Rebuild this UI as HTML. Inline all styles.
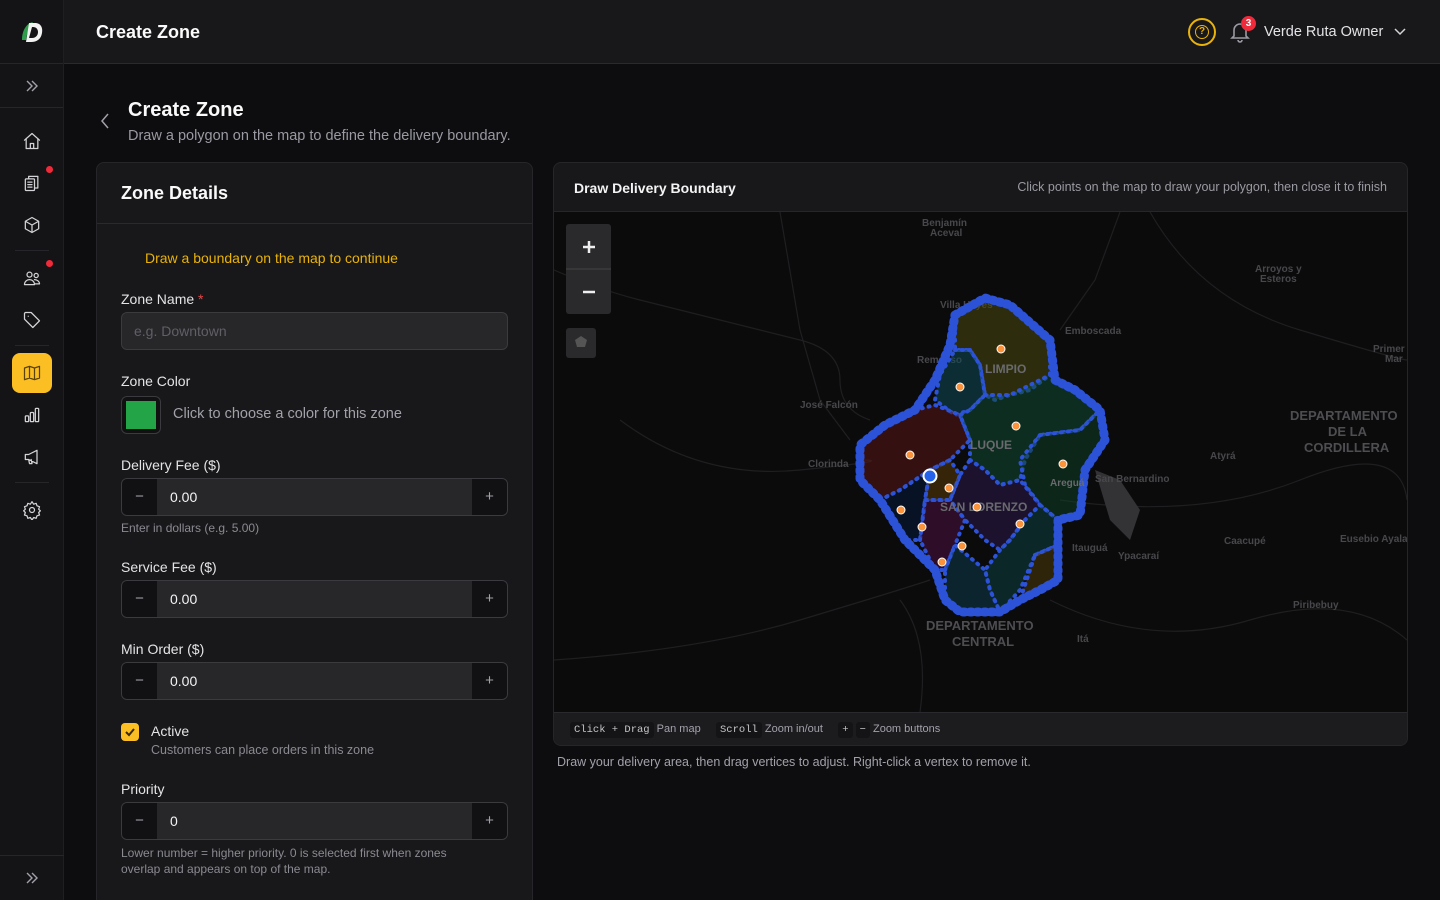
<!DOCTYPE html>
<html style="overflow:hidden;width:1440px;height:900px"><head><meta charset="utf-8"><style>
*{box-sizing:border-box;margin:0;padding:0}
body{width:1440px;height:900px;overflow:hidden;background:#0d0d0f;font-family:"Liberation Sans",sans-serif;color:#e8e8ea;position:relative}
.side{position:absolute;left:0;top:0;width:64px;height:900px;background:#141416;border-right:1px solid #1f1f22}
.logo{height:64px;display:flex;align-items:center;justify-content:center;border-bottom:1px solid #26262a}
.top{position:absolute;left:64px;top:0;right:0;height:64px;background:#18181b;border-bottom:1px solid #2a2a2e}
.ic{position:absolute;left:22px;width:20px;height:20px}
.ic svg{width:20px;height:20px;fill:none;stroke:#d4d4d8;stroke-width:1.5;stroke-linecap:round;stroke-linejoin:round}
.dot{position:absolute;width:7px;height:7px;border-radius:50%;background:#ef2b3b}
.card{position:absolute;background:#18181a;border:1px solid #26262a;border-radius:8px}
.lbl{position:absolute;left:24px;font-size:14px;color:#e4e4e7}
.inp{position:absolute;left:24px;width:387px;height:38px;border:1px solid #3a3a3f;border-radius:6px;background:#27272a;overflow:hidden}
.num .m,.num .p{position:absolute;top:0;width:35px;height:36px;background:#111113;color:#a1a1aa;font-size:15px;text-align:center;line-height:36px}
.num .m{left:0}.num .p{right:0}
.num .v{position:absolute;left:48px;top:10px;font-size:14px;color:#f4f4f5}
.hint{position:absolute;left:24px;font-size:12px;color:#8a8a92}
.kbd{font-family:"Liberation Mono",monospace;background:#141416;padding:2px 4px;border-radius:3px;font-size:10.5px;color:#c4c4c8}
</style></head><body>
<div class="side">
 <div class="logo"><svg width="28" height="28" viewBox="0 0 28 28"><path d="M4 22 C4 12 9 5 15 4 C11 9 9 15 8 22Z" fill="#2e9e4a"/><path d="M11 5 H17 C23 5 25 10 24 15 C23 21 19 24 13 24 H8 Z M14 9 L11 20 H14 C18 20 20 17 20 14 C20 11 18 9 15 9Z" fill="#f2f2f2"/></svg></div>
 <div style="height:44px;border-bottom:1px solid #26262a;display:flex;align-items:center;justify-content:center"><svg width="16" height="16" viewBox="0 0 16 16" fill="none" stroke="#a1a1aa" stroke-width="1.4"><path d="M3 3l5 5-5 5M8 3l5 5-5 5"/></svg></div>
 <div class="ic" style="top:131px"><svg viewBox="0 0 24 24"><path d="M3 11l9-8 9 8M5 9v12h14V9M10 21v-6h4v6"/></svg></div>
 <div class="ic" style="top:173px"><svg viewBox="0 0 24 24"><rect x="4" y="7" width="11" height="14" rx="1"/><path d="M8 7V4h11v14h-4M7 11h5M7 14h5M7 17h5"/></svg></div><div class="dot" style="left:46px;top:166px"></div>
 <div class="ic" style="top:215px"><svg viewBox="0 0 24 24"><path d="M12 3l8 4.5v9L12 21l-8-4.5v-9zM4 7.5l8 4.5 8-4.5M12 12v9"/></svg></div>
 <div style="position:absolute;left:15px;top:250px;width:34px;border-top:1px solid #26262a"></div>
 <div class="ic" style="top:268px"><svg viewBox="0 0 24 24"><circle cx="9" cy="8" r="3"/><circle cx="17" cy="9" r="2.5"/><path d="M3 20c0-4 3-6 6-6s6 2 6 6zM15 14c3 0 6 2 6 5h-5"/></svg></div><div class="dot" style="left:46px;top:260px"></div>
 <div class="ic" style="top:310px"><svg viewBox="0 0 24 24"><path d="M3 4v7l10 10 8-8L11 3H4zM7.5 7.5h.01"/></svg></div>
 <div style="position:absolute;left:15px;top:345px;width:34px;border-top:1px solid #26262a"></div>
 <div style="position:absolute;left:12px;top:353px;width:40px;height:40px;border-radius:8px;background:#fbbf24"></div>
 <div class="ic" style="top:363px"><svg viewBox="0 0 24 24" style="stroke:#5a4300"><path d="M3 6l6-2 6 2 6-2v14l-6 2-6-2-6 2zM9 4v14M15 6v14"/></svg></div>
 <div class="ic" style="top:405px"><svg viewBox="0 0 24 24"><rect x="4" y="13" width="4" height="7" rx="1"/><rect x="10" y="9" width="4" height="11" rx="1"/><rect x="16" y="4" width="4" height="16" rx="1"/></svg></div>
 <div class="ic" style="top:447px"><svg viewBox="0 0 24 24"><path d="M4 9h4l10-5v16L8 15H4zM8 15l1 5h3l-1-5"/></svg></div>
 <div style="position:absolute;left:15px;top:482px;width:34px;border-top:1px solid #26262a"></div>
 <div class="ic" style="top:500px"><svg viewBox="0 0 24 24"><circle cx="12" cy="12" r="3"/><path d="M12 2l2 3 3-1 1 3 3 1-1 3 2 2-2 2 1 3-3 1-1 3-3-1-2 3-2-3-3 1-1-3-3-1 1-3-2-2 2-2-1-3 3-1 1-3 3 1z"/></svg></div>
 <div style="position:absolute;left:0;top:855px;width:64px;border-top:1px solid #26262a;height:45px;display:flex;align-items:center;justify-content:center"><svg width="16" height="16" viewBox="0 0 16 16" fill="none" stroke="#a1a1aa" stroke-width="1.4"><path d="M3 3l5 5-5 5M8 3l5 5-5 5"/></svg></div>
</div>
<div class="top">
 <div style="position:absolute;left:32px;top:22px;font-size:18px;font-weight:bold;color:#fafafa">Create Zone</div>
 <div style="position:absolute;left:1124px;top:18px;width:28px;height:28px;border:2px solid #eab308;border-radius:50%"><div style="position:absolute;left:5px;top:5px;width:14px;height:14px;border:1.5px solid #eab308;border-radius:50%;color:#eab308;font-size:10px;font-weight:bold;text-align:center;line-height:11px">?</div></div>
 <svg style="position:absolute;left:1166px;top:21px" width="20" height="22" viewBox="0 0 20 22" fill="none" stroke="#9a9aa2" stroke-width="1.6"><path d="M4 15V9a6 6 0 0112 0v6l2 2H2zM8 19a2 2 0 004 0"/></svg>
 <div style="position:absolute;left:1177px;top:16px;width:15px;height:15px;border-radius:50%;background:#ef2b3b;color:#fff;font-size:10px;font-weight:bold;text-align:center;line-height:15px">3</div>
 <div style="position:absolute;left:1200px;top:24px;font-size:14.5px;color:#e4e4e7">Verde Ruta Owner</div>
 <svg style="position:absolute;left:1330px;top:27px" width="12" height="10" viewBox="0 0 12 10" fill="none" stroke="#d4d4d8" stroke-width="1.5"><path d="M1 2l5 5 5-5"/></svg>
</div>
<svg style="position:absolute;left:99px;top:113px" width="12" height="16" viewBox="0 0 12 16" fill="none" stroke="#a1a1aa" stroke-width="1.5"><path d="M9 1L3 8l6 7"/></svg>
<div style="position:absolute;left:128px;top:99px;font-size:20px;font-weight:bold;color:#fafafa">Create Zone</div>
<div style="position:absolute;left:128px;top:128px;font-size:14.5px;color:#9a9aa2">Draw a polygon on the map to define the delivery boundary.</div>

<div class="card" style="left:96px;top:162px;width:437px;height:748px">
 <div style="height:61px;border-bottom:1px solid #2a2a2e;padding:20px 24px;font-size:18px;font-weight:bold;color:#fafafa">Zone Details</div>
 <div style="position:absolute;left:48px;top:87px;font-size:14px;color:#eab308">Draw a boundary on the map to continue</div>
 <div class="lbl" style="top:128px">Zone Name <span style="color:#ef4444">*</span></div>
 <div class="inp" style="top:149px"><div style="position:absolute;left:12px;top:10px;font-size:14px;color:#5f5f66">e.g. Downtown</div></div>
 <div class="lbl" style="top:210px">Zone Color</div>
 <div style="position:absolute;left:24px;top:233px;width:40px;height:38px;border:1px solid #3a3a3f;border-radius:6px;background:#111"><div style="position:absolute;left:4px;top:4px;width:30px;height:28px;background:#22a447"></div></div>
 <div style="position:absolute;left:76px;top:243px;font-size:14.5px;color:#a1a1aa">Click to choose a color for this zone</div>
 <div class="lbl" style="top:294px">Delivery Fee ($)</div>
 <div class="inp num" style="top:315px"><div class="m">−</div><div class="v">0.00</div><div class="p">+</div></div>
 <div class="hint" style="top:358px">Enter in dollars (e.g. 5.00)</div>
 <div class="lbl" style="top:396px">Service Fee ($)</div>
 <div class="inp num" style="top:417px"><div class="m">−</div><div class="v">0.00</div><div class="p">+</div></div>
 <div class="lbl" style="top:478px">Min Order ($)</div>
 <div class="inp num" style="top:499px"><div class="m">−</div><div class="v">0.00</div><div class="p">+</div></div>
 <div style="position:absolute;left:24px;top:560px;width:18px;height:18px;border-radius:4px;background:#fbbf24"><svg width="18" height="18" viewBox="0 0 18 18" fill="none" stroke="#3a2a00" stroke-width="2"><path d="M5 9l3 3 5-6"/></svg></div>
 <div style="position:absolute;left:54px;top:560px;font-size:14px;color:#e4e4e7">Active</div>
 <div style="position:absolute;left:54px;top:580px;font-size:12.5px;color:#8a8a92">Customers can place orders in this zone</div>
 <div class="lbl" style="top:618px">Priority</div>
 <div class="inp num" style="top:639px"><div class="m">−</div><div class="v">0</div><div class="p">+</div></div>
 <div class="hint" style="top:682px;line-height:16px;width:350px">Lower number = higher priority. 0 is selected first when zones overlap and appears on top of the map.</div>
</div>

<div class="card" style="left:553px;top:162px;width:855px;height:584px;overflow:hidden">
 <div style="height:49px;border-bottom:1px solid #26262a;position:relative">
  <div style="position:absolute;left:20px;top:17px;font-size:14px;font-weight:bold;color:#f4f4f5">Draw Delivery Boundary</div>
  <div style="position:absolute;right:20px;top:17px;font-size:12.5px;color:#9a9aa2">Click points on the map to draw your polygon, then close it to finish</div>
 </div>
 <svg style="position:absolute;left:0;top:49px" width="853" height="500" viewBox="554 212 853 500">
  <rect x="554" y="212" width="853" height="500" fill="#0b0b0c"/>
  <g fill="none" stroke="#1f1f21" stroke-width="1.2">
   <path d="M554 270 Q600 290 640 300 T720 320 T800 340 T840 380 T870 420"/>
   <path d="M780 212 L800 330 L820 400 L850 440"/>
   <path d="M1120 212 L1095 280 L1060 330"/>
   <path d="M900 600 Q930 640 920 712"/>
   <path d="M554 660 Q700 650 800 620 T930 580"/>
   <path d="M1060 500 Q1200 520 1300 480 T1407 500"/>
   <path d="M1050 600 Q1150 650 1250 620 T1407 640"/>
   <path d="M620 420 Q700 480 800 470 T860 460"/>
   <path d="M1150 212 Q1200 300 1300 330 T1407 360"/>
  </g>
  <path d="M1095 470 L1120 480 L1140 510 L1130 540 L1110 520 Z" fill="#333336"/>
  <g font-family="Liberation Sans" font-weight="bold" fill="#48484c" font-size="10">
   <text x="922" y="226">Benjamín</text><text x="930" y="236">Aceval</text>
   <text x="1255" y="272">Arroyos y</text><text x="1260" y="282">Esteros</text>
   <text x="1065" y="334">Emboscada</text><text x="1373" y="352">Primer</text><text x="1385" y="362">Mar</text>
   <text x="800" y="408">José Falcón</text><text x="808" y="467">Clorinda</text><text x="1210" y="459">Atyrá</text>
   <text x="1095" y="482">San Bernardino</text><text x="1072" y="551">Itauguá</text><text x="1118" y="559">Ypacaraí</text>
   <text x="1224" y="544">Caacupé</text><text x="1340" y="542">Eusebio Ayala</text><text x="1293" y="608">Piribebuy</text>
   <text x="1077" y="642">Itá</text><text x="940" y="308">Villa Hayes</text><text x="917" y="363">Remanso</text>
   <g font-size="13" fill="#4e4e52"><text x="1290" y="420">DEPARTAMENTO</text><text x="1328" y="436">DE LA</text><text x="1304" y="452">CORDILLERA</text>
   <text x="926" y="630">DEPARTAMENTO</text><text x="952" y="646">CENTRAL</text></g>
  </g>
  <g stroke="#2c52d8" stroke-width="4" stroke-linejoin="round" stroke-linecap="round" stroke-dasharray="1 6" fill-opacity="0.55">
   <polygon fill="#4a4a10" points="955,315 985,298 1010,305 1050,340 1050,375 1030,390 1010,395 995,400 985,395 980,365 970,350 955,350"/>
   <polygon fill="#0e4a55" points="955,350 970,350 980,365 985,395 970,410 955,415 935,400 940,375"/>
   <polygon fill="#5a1515" points="915,410 935,405 960,415 970,440 950,460 930,470 900,490 880,500 860,480 860,445 885,425"/>
   <polygon fill="#0e4a30" points="985,395 1010,395 1050,375 1075,390 1100,410 1080,430 1040,435 1025,460 1020,480 1000,485 985,470 970,460 970,440 960,415 970,410"/>
   <polygon fill="#0e3e25" points="1040,435 1080,430 1100,410 1105,440 1085,470 1080,515 1058,520 1040,505 1025,485 1020,460"/>
   <polygon fill="#2c1a4a" points="970,460 985,470 1000,485 1020,480 1040,505 1025,520 1010,540 1000,550 985,540 965,520 950,500 960,475"/>
   <polygon fill="#0e4040" points="1025,520 1040,505 1058,520 1058,545 1035,555 1020,590 1000,612 990,590 985,570 1000,550 1010,540"/>
   <polygon fill="#4a3a08" points="1035,555 1058,545 1058,580 1040,590 1020,600"/>
   <polygon fill="#051a3a" points="880,500 900,490 930,470 925,500 920,540 905,540"/>
   <polygon fill="#4a1040" points="920,540 925,500 950,500 965,520 955,545 945,570 935,570"/>
   <polygon fill="#5a3a05" points="930,470 950,460 960,475 950,500 925,500"/>
   <polygon fill="#0e3a4a" points="945,570 955,545 985,570 990,590 1000,612 960,612 945,600"/>
  </g>
  <polygon fill="none" stroke="#2c52d8" stroke-width="9" stroke-linejoin="round" stroke-linecap="round" stroke-dasharray="2 5" points="955,315 985,298 1010,305 1050,340 1055,380 1075,390 1100,410 1105,440 1085,470 1080,515 1058,520 1058,580 1040,590 1020,600 1000,612 960,612 945,600 935,570 905,540 880,500 860,480 860,445 885,425 915,410 935,380 950,345"/>
  <g font-family="Liberation Sans" font-weight="bold" fill="#6a6a6e" font-size="12"><text x="985" y="373">LIMPIO</text><text x="970" y="449">LUQUE</text><text x="940" y="511">SAN LORENZO</text><text x="1050" y="486" font-size="10">Areguá</text></g>
  <g fill="#fb923c" stroke="#fff" stroke-width="1">
   <circle cx="1001" cy="349" r="4"/><circle cx="960" cy="387" r="4"/><circle cx="1016" cy="426" r="4"/><circle cx="910" cy="455" r="4"/><circle cx="1063" cy="464" r="4"/><circle cx="949" cy="488" r="4"/><circle cx="977" cy="507" r="4"/><circle cx="901" cy="510" r="4"/><circle cx="1020" cy="524" r="4"/><circle cx="922" cy="527" r="4"/><circle cx="962" cy="546" r="4"/><circle cx="942" cy="562" r="4"/>
  </g>
  <circle cx="930" cy="476" r="6.5" fill="#2563eb" stroke="#fff" stroke-width="2"/>
  <rect x="566" y="224" width="45" height="90" rx="3" fill="#2a2a2d"/>
  <line x1="566" y1="269" x2="611" y2="269" stroke="#444"/>
  <path d="M583 247h12M589 241v12M583 292h12" stroke="#eee" stroke-width="2.5"/>
  <rect x="566" y="328" width="30" height="30" rx="3" fill="#2a2a2d"/>
  <polygon points="581,336 587,340 585,347 577,347 575,340" fill="#555"/>
 </svg>
 <div style="position:absolute;left:0;top:549px;width:853px;height:34px;background:#1c1c1f;border-top:1px solid #2a2a2e;font-size:11px;color:#a1a1aa;padding:10px 16px;white-space:nowrap">
  <span class="kbd">Click + Drag</span> Pan map &nbsp;&nbsp;&nbsp; <span class="kbd">Scroll</span> Zoom in/out &nbsp;&nbsp;&nbsp; <span class="kbd">+</span> <span class="kbd">−</span> Zoom buttons
 </div>
</div>
<div style="position:absolute;left:557px;top:755px;font-size:12.5px;color:#a1a1aa">Draw your delivery area, then drag vertices to adjust. Right-click a vertex to remove it.</div>
</body></html>
